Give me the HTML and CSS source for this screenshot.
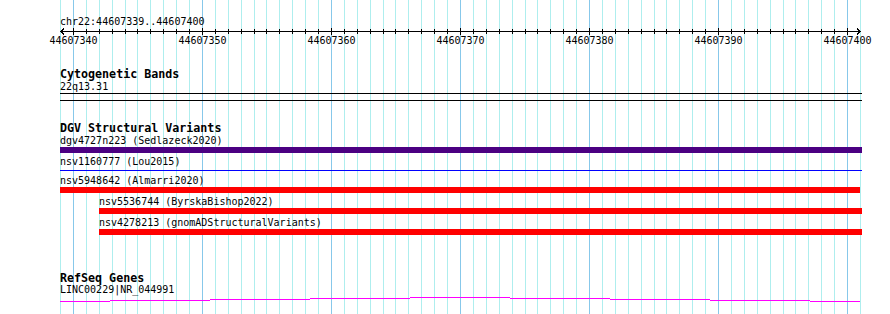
FILE: index.html
```html
<!DOCTYPE html>
<html>
<head>
    <title>chr22:44607339..44607400</title>
    <link rel="stylesheet" href="styles.css">
</head>
<body>
    <div class="panel">
        <svg class="grid" id="grid" width="890" height="314"></svg>

        <div class="ruler">
            <div class="seg-name">chr22:44607339..44607400</div>
        </div>

        <section class="track cyto">
            <h2 class="track-title">Cytogenetic Bands</h2>
            <div class="label">22q13.31</div>
            <div class="band"></div>
        </section>

        <section class="track dgv">
            <h2 class="track-title">DGV Structural Variants</h2>
            <div class="feature">
                <div class="label">dgv4727n223 (Sedlazeck2020)</div>
                <div class="bar indigo"></div>
            </div>
            <div class="feature">
                <div class="label">nsv1160777 (Lou2015)</div>
                <div class="bar thin"></div>
            </div>
            <div class="feature">
                <div class="label">nsv5948642 (Almarri2020)</div>
                <div class="bar red short"></div>
            </div>
            <div class="feature inset">
                <div class="label">nsv5536744 (ByrskaBishop2022)</div>
                <div class="bar red"></div>
            </div>
            <div class="feature inset">
                <div class="label">nsv4278213 (gnomADStructuralVariants)</div>
                <div class="bar red"></div>
            </div>
        </section>

        <section class="track refseq">
            <h2 class="track-title">RefSeq Genes</h2>
            <div class="label">LINC00229|NR_044991</div>
            <svg class="transcript" width="800" height="5">
                <path d="M0 4.5H50M50 3.5H150M150 2.5H250M250 1.5H350M350 .5H450M450 1.5H550M550 2.5H650M650 3.5H750M750 4.5H800"/>
            </svg>
        </section>
    </div>

    <script>
        // Grid and ruler, one line per base
        const NS = 'http://www.w3.org/2000/svg';
        const grid = document.getElementById('grid');
        const start = 44607339, end = 44607401;
        const left = 60, right = 860;
        const scale = (right - left) / (end - start);

        function add(tag, attrs, text) {
            const el = document.createElementNS(NS, tag);
            for (const k in attrs) el.setAttribute(k, attrs[k]);
            if (text) el.textContent = text;
            grid.appendChild(el);
            return el;
        }

        const xAt = pos => Math.round(left + (pos - start) * scale) + 0.5;

        for (let pos = start; pos <= end; pos++) {
            const x = xAt(pos);
            add('line', { x1: x, x2: x, y1: 0, y2: 314,
                class: pos % 10 === 0 ? 'major' : 'minor' });
        }

        // ruler
        add('line', { x1: left, x2: right + 1, y1: 31.5, y2: 31.5, class: 'axis' });
        add('path', { d: 'M63.5 28V29.5H62.5V30.5H61.5V31.5', class: 'axis' });
        add('path', { d: 'M63.5 35V33.5H62.5V32.5H61.5V31.5', class: 'axis' });
        add('path', { d: 'M857.5 28V29.5H858.5V30.5H859.5V31.5', class: 'axis' });
        add('path', { d: 'M857.5 35V33.5H858.5V32.5H859.5V31.5', class: 'axis' });

        for (let pos = start + 1; pos < end; pos++) {
            const x = xAt(pos);
            const major = pos % 10 === 0;
            add('line', { x1: x, x2: x, y1: major ? 28 : 29, y2: major ? 35 : 34, class: 'axis' });
            if (major) add('text', { x: x, y: 44, class: 'tick-label' }, String(pos));
        }
    </script>
</body>
</html>
```

FILE: styles.css
```css
:root {
    --grid-minor: #aeeeee;
    --grid-major: #87c8ea;
    --indigo: #4b0082;
    --red: #ff0000;
    --blue: #0000ff;
    --magenta: #ff00ff;
}

body {
    margin: 0;
    background: #ffffff;
    font-family: "DejaVu Sans Mono", monospace;
    font-size: 10px;
    color: #000000;
}

.panel {
    position: relative;
    z-index: 0;
    width: 890px;
    height: 314px;
    overflow: hidden;
}

.grid {
    position: absolute;
    left: 0;
    top: 0;
    z-index: -1;
    shape-rendering: crispEdges;
}

.grid .minor { stroke: var(--grid-minor); stroke-width: 1; }
.grid .major { stroke: var(--grid-major); stroke-width: 1; }
.grid .axis { stroke: #000000; stroke-width: 1; fill: none; }

.grid .tick-label {
    font-family: "DejaVu Sans Mono", monospace;
    font-size: 10px;
    text-anchor: middle;
    fill: #000000;
}

.ruler {
    height: 68px;
}

.seg-name {
    padding: 16px 0 0 60px;
    line-height: 12px;
}

.track {
    padding-left: 60px;
}

.track-title {
    margin: 0;
    font-size: 11.667px;
    font-weight: bold;
    line-height: 12px;
}

.label {
    line-height: 13px;
    white-space: nowrap;
}

.band {
    width: 802px;
    height: 6px;
    border-top: 1px solid #000000;
    border-bottom: 1px solid #000000;
}

.dgv {
    margin-top: 21px;
}

.feature {
    margin-bottom: 2px;
}

.feature.inset {
    margin-left: 39px;
}

.bar {
    width: 802px;
    height: 6px;
}

.feature.inset .bar { width: 763px; }

.bar.indigo { background: var(--indigo); }
.bar.red { background: var(--red); }
.bar.short { width: 800px; }

.bar.thin {
    height: 1px;
    margin: 2px 0 3px;
    background: var(--blue);
}

.refseq {
    margin-top: 37px;
}

.refseq .label {
    line-height: 12px;
}

.transcript {
    display: block;
    margin-top: 1px;
    shape-rendering: crispEdges;
}

.transcript path {
    stroke: var(--magenta);
    stroke-width: 1;
    fill: none;
}
```
